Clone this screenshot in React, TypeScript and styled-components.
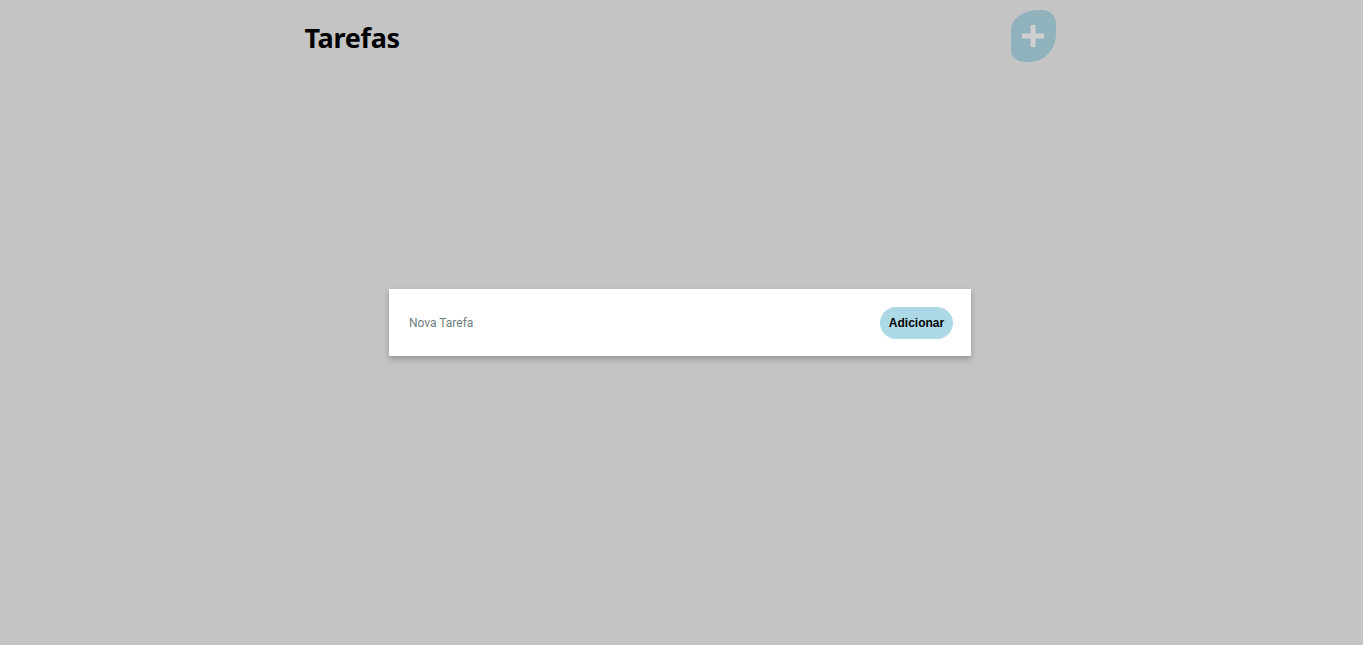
import React from "react";
import styled, { createGlobalStyle } from "styled-components";

const Global = createGlobalStyle`
  html, body { margin: 0; padding: 0; }
  body { background: #c4c4c4; font-family: "Noto Sans", "Open Sans", sans-serif; }
  #root { min-height: 100vh; }
`;

const Page = styled.div`
  position: relative;
  height: 645px;
  display: flex;
  flex-direction: column;
  align-items: center;
  padding-right: 3px;
`;

const Header = styled.header`
  width: 751px;
  display: flex;
  justify-content: space-between;
  align-items: flex-start;
  padding-top: 10px;
`;

const Title = styled.h1`
  margin: 10px 0 0 0;
  font-family: "Noto Sans", "Open Sans", sans-serif;
  font-weight: 700;
  font-size: 27px;
  line-height: 36px;
  color: #000;
  letter-spacing: -0.3px;
`;

const AddBlob = styled.button`
  width: 45px;
  height: 52px;
  border: none;
  padding: 0;
  background: #8fb2bc;
  border-radius: 28px 14px 26px 14px / 20px 14px 28px 12px;
  display: flex;
  align-items: center;
  justify-content: center;
  cursor: pointer;
`;

const Overlay = styled.div`
  position: absolute;
  top: 0;
  left: 0;
  right: 3px;
  bottom: 0;
  display: flex;
  align-items: center;
  justify-content: center;
`;

const Card = styled.form`
  width: 582px;
  height: 67px;
  box-sizing: border-box;
  background: #fff;
  box-shadow: 0 3px 6px rgba(0, 0, 0, 0.25);
  display: flex;
  align-items: center;
  justify-content: space-between;
  padding: 0 18px 0 20px;
`;

const Input = styled.input`
  border: none;
  outline: none;
  flex: 1;
  font-family: Roboto, "Liberation Sans", sans-serif;
  font-size: 12px;
  color: #333;
  padding: 0;
  &::placeholder { color: #6f7b80; }
`;

const Button = styled.button`
  height: 32px;
  width: 73px;
  border: none;
  border-radius: 16px;
  background: #add8e6;
  font-family: "Liberation Sans", Arial, sans-serif;
  font-weight: 700;
  font-size: 12px;
  color: #000;
  padding: 0;
  cursor: pointer;
`;

export default function App() {
  return (
    <>
      <Global />
      <Page>
        <Header>
          <Title>Tarefas</Title>
          <AddBlob aria-label="Adicionar tarefa">
            <svg width="24" height="24" viewBox="0 0 24 24">
              <rect x="9.5" y="1" width="5" height="22" fill="#cfcfcf" />
              <rect x="1" y="9.5" width="22" height="5" fill="#cfcfcf" />
            </svg>
          </AddBlob>
        </Header>
        <Overlay>
          <Card onSubmit={(e) => e.preventDefault()}>
            <Input placeholder="Nova Tarefa" />
            <Button type="submit">Adicionar</Button>
          </Card>
        </Overlay>
      </Page>
    </>
  );
}
